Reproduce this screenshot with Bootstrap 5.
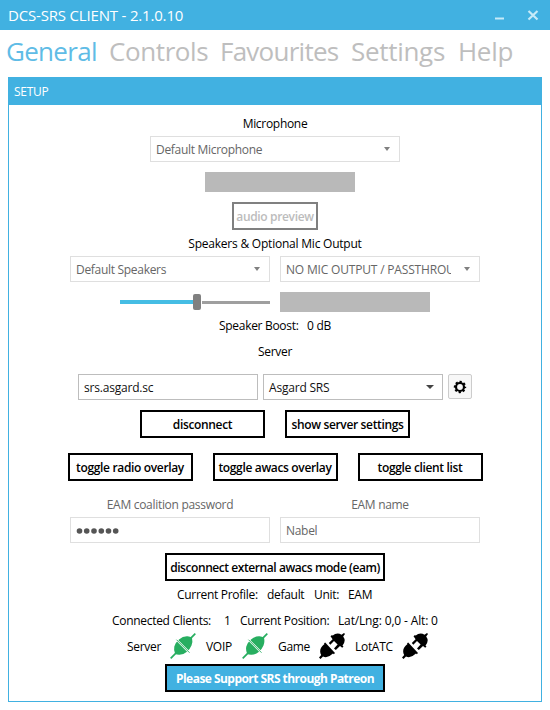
<!DOCTYPE html>
<html lang="en">
<head>
<meta charset="utf-8">
<title>DCS-SRS Client</title>
<link href="https://cdn.jsdelivr.net/npm/bootstrap@5.3.0/dist/css/bootstrap.min.css" rel="stylesheet">
<style>
:root{--accent:#41b1e1}
body{width:550px;height:710px;overflow:hidden;background:#fff;color:#000;font:12px/16px "Open Sans","Noto Sans",sans-serif;letter-spacing:-.3px;white-space:nowrap}
.titlebar{height:30px;background:var(--accent);color:#fff;font-size:15px;line-height:31px;letter-spacing:-.18px;padding-left:8px}
.tabs{height:47px;padding-left:6px;font-size:26px;line-height:43px;letter-spacing:-.5px}
.tabs a{color:#bebebe;text-decoration:none;flex:none}
.tabs a.active{color:#5fbce6}
.w-gen{width:103px;letter-spacing:-.7px}.w-con{width:111px;letter-spacing:-.4px}.w-fav{width:131px;letter-spacing:-.75px}.w-set{width:107px;letter-spacing:-.3px}.w-help{letter-spacing:-.3px}
.setup{width:534px;height:625px;margin-left:8px;border:1px solid var(--accent)}
.setup-head{height:27px;background:var(--accent);color:#fff;padding-left:5px;line-height:27px;letter-spacing:-.3px}
.line{height:16px}
.field{height:26px;border:1px solid #dfdfdf;padding:1px 12px 0 5px;color:#666;background:#fff}
.field.live{border-color:#bdbdbd;color:#111;letter-spacing:-.2px}
.f180{width:180px}.f200{width:200px}.f250{width:250px}
.clip{overflow:hidden;width:165px;letter-spacing:-.18px}
.arrow{width:0;height:0;border:3.5px solid transparent;border-top:4px solid #808080;border-bottom:0;flex:none;margin:0 -3px 1px 0}
.live .arrow{border-top-color:#444;border-left-width:4px;border-right-width:4px;margin-right:-4px}
.meter{width:150px;height:20px;background:#b9b9b9}
.slider{width:150px;height:20px}
.track-on{width:73px;height:4px;background:#45bde4}
.thumb{width:8px;height:16px;border-radius:2px;background:#808080;flex:none}
.track-off{width:68px;height:3px;background:#9f9f9f}
.push{height:28px;width:125px;border:2px solid #000;background:#fff;color:#000;font-size:12px;font-weight:600;line-height:23px;padding:1px 0 0;letter-spacing:-.34px}
.push.off{width:86px;border-color:#808080;color:#bcbcbc}
.push.wide{width:220px;letter-spacing:-.43px}
.push.fill{background:var(--accent);color:#fff;font-weight:700;letter-spacing:-.54px}
.cog{width:24px;height:25px;border:1px solid #ccc;border-radius:2px;background:#f7f7f7;padding:0}
.cap{color:#666}
.r1{margin-top:11px}.r2{margin-top:4px}.r3{margin-top:10px}.r3.meter{margin-left:10px}.r4{margin-top:6px;letter-spacing:-.22px}
.r5{margin-top:4px;gap:10px}.r6{margin-top:10px;gap:10px}.r7{margin-top:6px;width:112px}
.r8{margin-top:10px}.r9{margin-top:14px;gap:5px}.r10{margin-top:10px;gap:20px}.r11{margin-top:15px;gap:20px}
.r12{margin-top:16px;gap:10px}.r13{margin-top:4px;gap:10px}.r14{margin-top:10px}
.r15{margin-top:6px;width:196px}.r16{margin-top:10px;width:326px}.r17{margin-top:4px;width:302px;height:26px;margin-left:6px}.r18{margin-top:5px}
.c-boost{width:88px}.c90{width:90px}.c47{width:47px}.c34{width:34px}
.c112{width:112px}.c16{width:16px}.c98{width:98px}.pos{letter-spacing:-.15px}
.c43{width:43px}.c36{width:36px}.c41{width:41px}
.r17 span{padding-top:1px}
.plug{width:26px;height:26px;margin-right:10px;flex:none;fill:#000}
.live-plug{fill:#27ae60;color:#27ae60}
.line span,.r17 span{flex:none}
</style>
</head>
<body>
<svg class="d-none">
<symbol id="on" viewBox="0 0 26 26"><path d="M.7 25.300 25.300.7" stroke="currentColor" stroke-width="1.700"/><path d="M5.200 21Q3.500 17 4.300 13.500 5.500 9.500 9 6.500 13 3 17.500 3.300 20 3.600 22 4.800 23 9 21.500 12.500 20 16 17 18.700 13 22 9 21.800 6.800 21.700 5.200 21Z"/><path d="m6.200 6.400 13.600 13.600" stroke="#fff" stroke-width="2"/><path d="m6.500 6.700 13 13" stroke="currentColor" stroke-width=".9"/></symbol>
<symbol id="off" viewBox="0 0 26 26"><path d="M0 24.600 2.200 22Q-1 16 5.500 11L5 10.200 6.200 9.600 16 20 14.800 21.200 14 20.600Q9 25.500 4 23.600L1.500 26ZM11.500 3.200 13 2 24.500 13.400 23.200 14.800 21 13 16.800 17 15 15.600 18.600 11.600 15 8 11.300 11.800 9.800 10 13.600 6.200ZM13.400 2.800Q18-1 22.500 1.800L25 0 26 1 24.200 3.400Q27.500 8 23.400 12.800Z"/></symbol>
</svg>
<header class="titlebar d-flex"><span>DCS-SRS CLIENT - 2.1.0.10</span>
<svg class="ms-auto" width="56" height="30" fill="none" stroke="#c6eaf8" stroke-width="2.200"><path d="M1 18.500h9M34.500 11l9 8.500M43.500 11l-9 8.500"/></svg></header>
<nav class="tabs d-flex"><a class="w-gen active" href="#">General</a><a class="w-con" href="#">Controls</a><a class="w-fav" href="#">Favourites</a><a class="w-set" href="#">Settings</a><a class="w-help" href="#">Help</a></nav>
<main class="setup">
<div class="setup-head">SETUP</div>
<div class="d-flex flex-column align-items-center">
<div class="line r1">Microphone</div>
<div class="field f250 r2 d-flex align-items-center justify-content-between">Default Microphone<i class="arrow"></i></div>
<div class="meter r3"></div>
<button class="push off r3">audio preview</button>
<div class="line r4">Speakers &amp; Optional Mic Output</div>
<div class="d-flex r5"><div class="field f200 d-flex align-items-center justify-content-between">Default Speakers<i class="arrow"></i></div><div class="field f200 d-flex align-items-center justify-content-between"><span class="clip">NO MIC OUTPUT / PASSTHROUGH</span><i class="arrow"></i></div></div>
<div class="d-flex r6"><div class="slider d-flex align-items-center"><div class="track-on"></div><div class="thumb"></div><div class="track-off ms-auto"></div></div><div class="meter"></div></div>
<div class="line d-flex r7"><span class="c-boost">Speaker Boost:</span><span>0 dB</span></div>
<div class="line r8">Server</div>
<div class="d-flex r9"><div class="field live f180 d-flex align-items-center">srs.asgard.sc</div><div class="field live f180 d-flex align-items-center justify-content-between">Asgard SRS<i class="arrow"></i></div>
<button class="cog d-flex align-items-center justify-content-center"><svg width="14" height="14" viewBox="-7 -7 14 14" fill="none" stroke="#000"><circle r="4" stroke-width="2.200"/><circle r="5.200" stroke-width="2" stroke-dasharray="2.200 1.884" stroke-dashoffset="1.100"/></svg></button></div>
<div class="d-flex r10"><button class="push">disconnect</button><button class="push">show server settings</button></div>
<div class="d-flex r11"><button class="push">toggle radio overlay</button><button class="push">toggle awacs overlay</button><button class="push">toggle client list</button></div>
<div class="line d-flex cap r12"><span class="f200 text-center">EAM coalition password</span><span class="f200 text-center">EAM name</span></div>
<div class="d-flex r13"><div class="field f200 d-flex align-items-center"><svg width="44" height="6" fill="#555"><circle cx="3.500" cy="3" r="2.800"/><circle cx="10.700" cy="3" r="2.800"/><circle cx="18" cy="3" r="2.800"/><circle cx="25.300" cy="3" r="2.800"/><circle cx="32.500" cy="3" r="2.800"/><circle cx="39.700" cy="3" r="2.800"/></svg></div><div class="field f200 d-flex align-items-center">Nabel</div></div>
<button class="push wide r14">disconnect external awacs mode (eam)</button>
<div class="line d-flex r15"><span class="c90">Current Profile:</span><span class="c47">default</span><span class="c34">Unit:</span><span>EAM</span></div>
<div class="line d-flex r16"><span class="c112">Connected Clients:</span><span class="c16">1</span><span class="c98">Current Position:</span><span class="pos">Lat/Lng: 0,0 - Alt: 0</span></div>
<div class="d-flex r17 align-items-center"><span class="c43">Server</span><svg class="plug live-plug"><use href="#on"/></svg><span class="c36">VOIP</span><svg class="plug live-plug"><use href="#on"/></svg><span class="c41">Game</span><svg class="plug"><use href="#off"/></svg><span class="c47">LotATC</span><svg class="plug"><use href="#off"/></svg></div>
<button class="push wide fill r18">Please Support SRS through Patreon</button>
</div>
</main>
<script src="https://cdn.jsdelivr.net/npm/bootstrap@5.3.0/dist/js/bootstrap.bundle.min.js"></script>
</body>
</html>
